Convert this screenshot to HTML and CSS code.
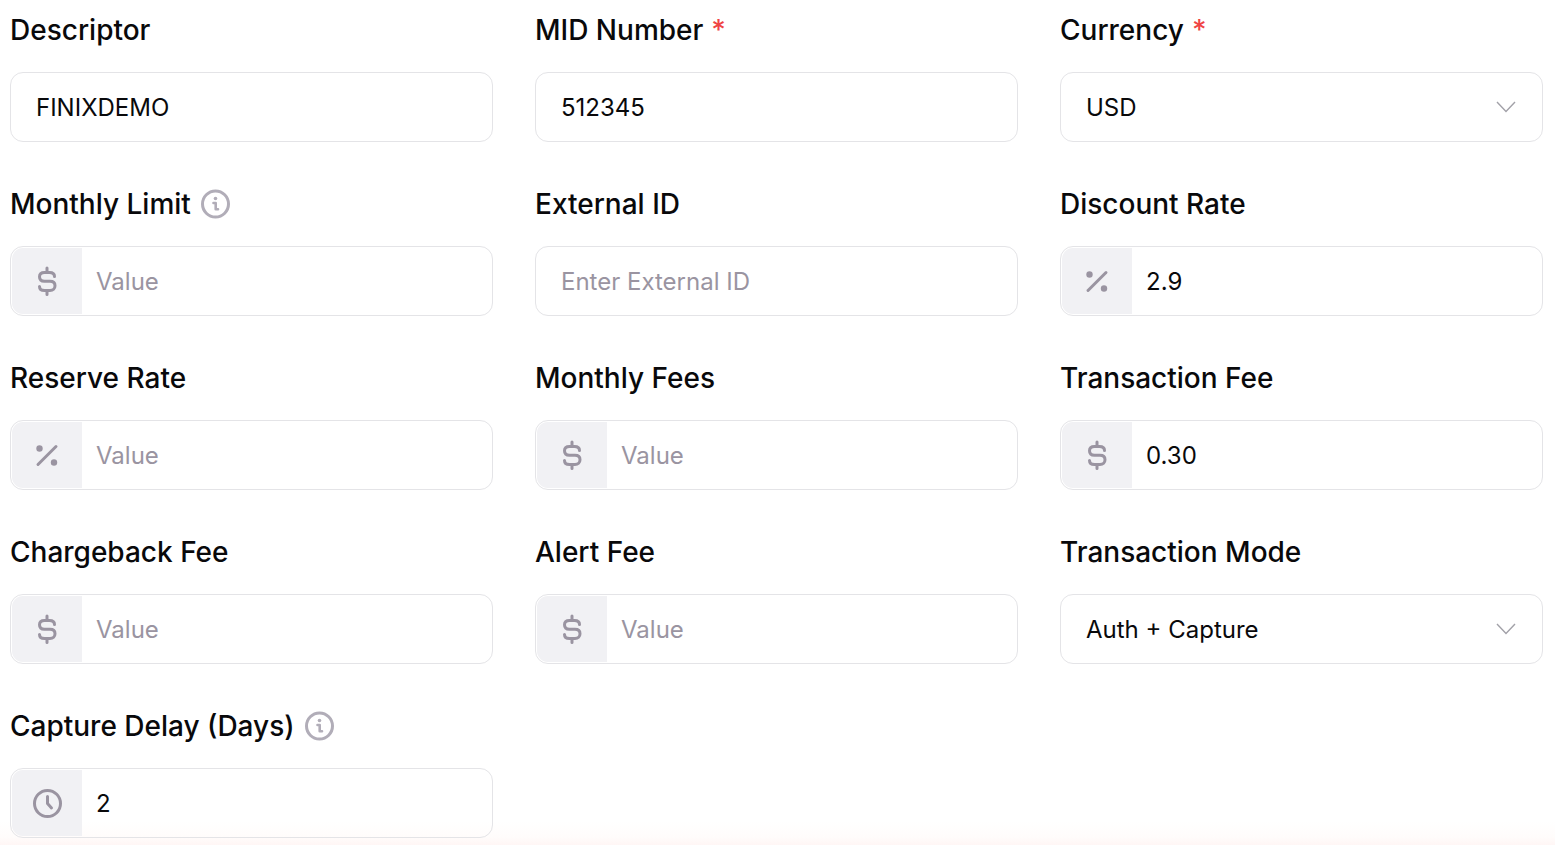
FILE: index.html
```html
<!DOCTYPE html>
<html lang="en">

<head>
  <meta charset="UTF-8">
  <meta name="viewport" content="width=device-width, initial-scale=1.0">
  <title>MID Settings</title>
  <link rel="stylesheet" href="styles.css">
</head>

<body>
  <!-- Shared icons -->
  <svg class="sprite" aria-hidden="true">
    <symbol id="icon-dollar" viewBox="0 0 30 30">
      <path d="M15 2v4M15 24.500v4M22.500 10.500C22.500 8 20.500 6.500 17.500 6.500h-5C9.500 6.500 7.500 8 7.500 10.800S9.500 15.300 12.500 15.300h5.500c3 0 5 1.600 5 4.400S21 24.500 18 24.500h-5.500C9.500 24.500 7.500 23 7.500 20.500" />
    </symbol>
    <symbol id="icon-percent" viewBox="0 0 30 30">
      <path d="M6 24.500L24 6.500" />
      <circle class="dot" cx="7.500" cy="8.500" r="3.200" />
      <circle class="dot" cx="22" cy="22.500" r="3.200" />
    </symbol>
    <symbol id="icon-clock" viewBox="0 0 30 30">
      <circle cx="15.500" cy="15.500" r="13" />
      <path d="M15.500 8.500v7l4 4.500" />
    </symbol>
    <symbol id="icon-info" viewBox="0 0 30 30">
      <circle cx="14.500" cy="15" r="13" />
      <path class="thin" d="M12.500 14h2.200v6.300h2.300" />
      <circle class="dot-info" cx="14.500" cy="9.500" r="1.800" />
    </symbol>
  </svg>

  <main>
    <form class="form-grid">
      <div class="field">
        <label for="descriptor">Descriptor</label>
        <div class="control">
          <input type="text" id="descriptor" name="descriptor" value="FINIXDEMO">
        </div>
      </div>
      <div class="field">
        <label for="mid_number">MID Number <span class="required">*</span></label>
        <div class="control">
          <input type="text" id="mid_number" name="mid_number" value="512345" required>
        </div>
      </div>
      <div class="field">
        <label for="currency">Currency <span class="required">*</span></label>
        <div class="control">
          <select id="currency" name="currency" required>
            <option>USD</option>
          </select>
          <svg class="chevron" viewBox="0 0 20 12" aria-hidden="true"><path d="M1 1l9 9.500L19 1" /></svg>
        </div>
      </div>

      <div class="field">
        <label for="monthly_limit">Monthly Limit <svg class="icon info"><use href="#icon-info" /></svg></label>
        <div class="control">
          <span class="addon"><svg class="icon"><use href="#icon-dollar" /></svg></span>
          <input type="text" id="monthly_limit" name="monthly_limit" placeholder="Value">
        </div>
      </div>
      <div class="field">
        <label for="external_id">External ID</label>
        <div class="control">
          <input type="text" id="external_id" name="external_id" placeholder="Enter External ID">
        </div>
      </div>
      <div class="field">
        <label for="discount_rate">Discount Rate</label>
        <div class="control">
          <span class="addon"><svg class="icon"><use href="#icon-percent" /></svg></span>
          <input type="text" id="discount_rate" name="discount_rate" placeholder="Value" value="2.9">
        </div>
      </div>

      <div class="field">
        <label for="reserve_rate">Reserve Rate</label>
        <div class="control">
          <span class="addon"><svg class="icon"><use href="#icon-percent" /></svg></span>
          <input type="text" id="reserve_rate" name="reserve_rate" placeholder="Value">
        </div>
      </div>
      <div class="field">
        <label for="monthly_fees">Monthly Fees</label>
        <div class="control">
          <span class="addon"><svg class="icon"><use href="#icon-dollar" /></svg></span>
          <input type="text" id="monthly_fees" name="monthly_fees" placeholder="Value">
        </div>
      </div>
      <div class="field">
        <label for="transaction_fee">Transaction Fee</label>
        <div class="control">
          <span class="addon"><svg class="icon"><use href="#icon-dollar" /></svg></span>
          <input type="text" id="transaction_fee" name="transaction_fee" placeholder="Value" value="0.30">
        </div>
      </div>

      <div class="field">
        <label for="chargeback_fee">Chargeback Fee</label>
        <div class="control">
          <span class="addon"><svg class="icon"><use href="#icon-dollar" /></svg></span>
          <input type="text" id="chargeback_fee" name="chargeback_fee" placeholder="Value">
        </div>
      </div>
      <div class="field">
        <label for="alert_fee">Alert Fee</label>
        <div class="control">
          <span class="addon"><svg class="icon"><use href="#icon-dollar" /></svg></span>
          <input type="text" id="alert_fee" name="alert_fee" placeholder="Value">
        </div>
      </div>
      <div class="field">
        <label for="transaction_mode">Transaction Mode</label>
        <div class="control">
          <select id="transaction_mode" name="transaction_mode">
            <option>Auth + Capture</option>
          </select>
          <svg class="chevron" viewBox="0 0 20 12" aria-hidden="true"><path d="M1 1l9 9.500L19 1" /></svg>
        </div>
      </div>

      <div class="field">
        <label for="capture_delay">Capture Delay (Days) <svg class="icon info"><use href="#icon-info" /></svg></label>
        <div class="control">
          <span class="addon"><svg class="icon"><use href="#icon-clock" /></svg></span>
          <input type="text" id="capture_delay" name="capture_delay" placeholder="Value" value="2">
        </div>
      </div>
    </form>
  </main>
</body>

</html>
```
FILE: styles.css
```css
* {
  box-sizing: border-box;
  margin: 0;
  padding: 0;
  font-family: Inter, sans-serif;
}

body {
  background: #ffffff linear-gradient(to top, #fff6f5, #fffcfb 8px, #ffffff 24px) no-repeat;
  color: #09090b;
}

.sprite {
  display: none;
}

main {
  padding: 13px 12px 7px 10px;
}

.form-grid {
  display: grid;
  grid-template-columns: repeat(3, 1fr);
  gap: 45px 42px;
}

.field {
  display: flex;
  flex-direction: column;
  gap: 25px;
  min-width: 0;
}

label {
  display: flex;
  align-items: center;
  gap: 8px;
  font-size: 28px;
  font-weight: 500;
  line-height: 34px;
}

.required {
  color: #ef4444;
}

.control {
  display: flex;
  position: relative;
  height: 70px;
  padding: 1px;
  border: 1px solid #e4e4e7;
  border-radius: 13px;
}

input,
select {
  flex: 1;
  min-width: 0;
  padding: 0 24px;
  border: none;
  border-radius: 11px;
  outline: none;
  background: transparent;
  color: #09090b;
  font-size: 24px;
  appearance: none;
}

input::placeholder {
  color: #9a94a1;
}

.addon {
  display: flex;
  flex: none;
  align-items: center;
  justify-content: center;
  width: 70px;
  border-radius: 11px 0 0 11px;
  background-color: #f1f1f4;
}

.addon + input {
  padding-left: 14px;
}

.icon {
  width: 30px;
  height: 30px;
  fill: none;
  stroke: #9a94a1;
  stroke-width: 3;
  stroke-linecap: round;
  stroke-linejoin: round;
}

.icon.info {
  margin-left: 2px;
  stroke: #b1adb8;
}

.dot {
  fill: #9a94a1;
  stroke: none;
}

.dot-info {
  fill: #b1adb8;
  stroke: none;
}

.thin {
  stroke-width: 2.6;
}

/* arrow drawn over the select */
.chevron {
  position: absolute;
  top: 28px;
  right: 26px;
  width: 20px;
  height: 12px;
  fill: none;
  stroke: #a2a1a8;
  stroke-width: 1.4;
  pointer-events: none;
}
```
